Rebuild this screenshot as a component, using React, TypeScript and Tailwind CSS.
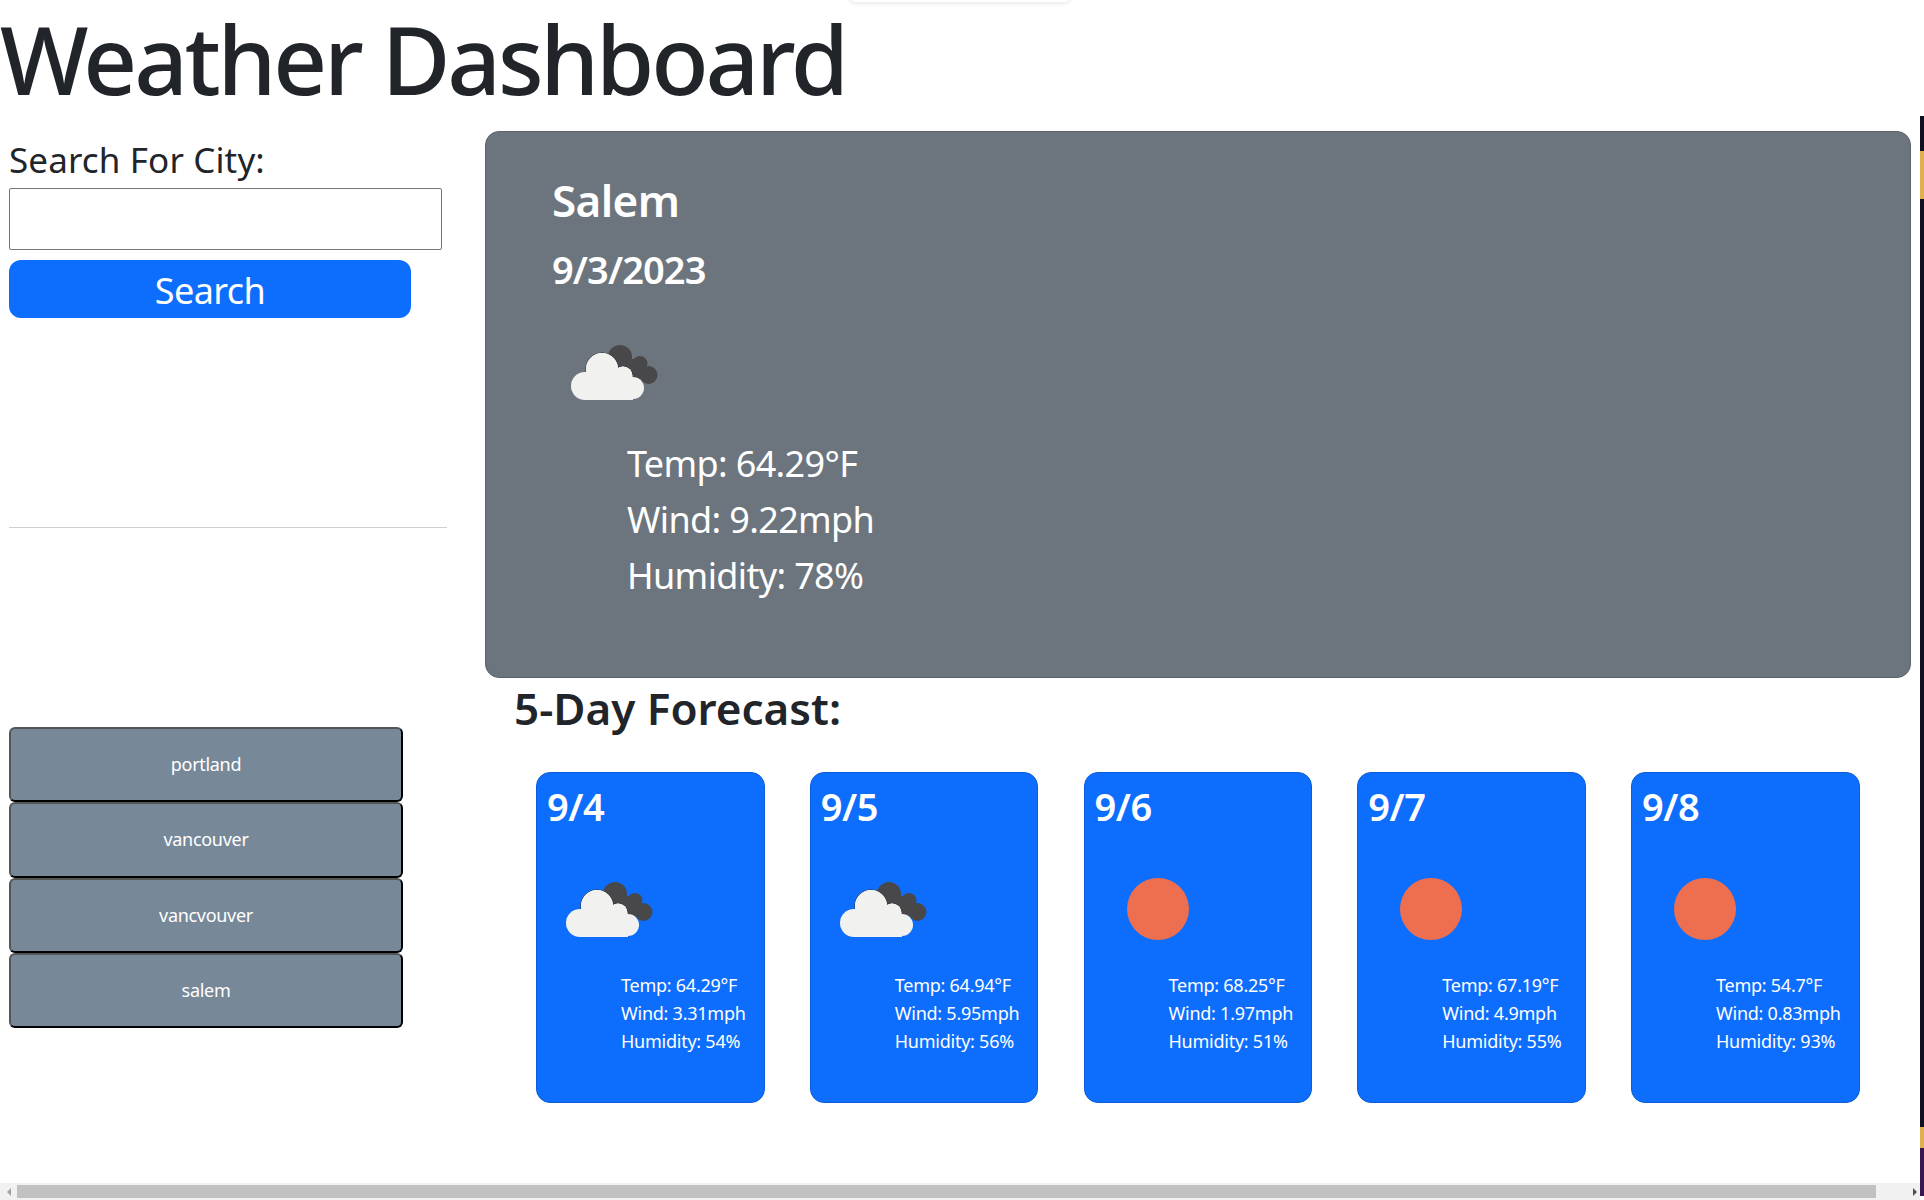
const font = "font-['Noto_Sans','Open_Sans',sans-serif]"

const cities = ["portland", "vancouver", "vancvouver", "salem"]

const forecast = [
  { date: "9/4", icon: "clouds", temp: "64.29", wind: "3.31", humidity: "54" },
  { date: "9/5", icon: "clouds", temp: "64.94", wind: "5.95", humidity: "56" },
  { date: "9/6", icon: "sun", temp: "68.25", wind: "1.97", humidity: "51" },
  { date: "9/7", icon: "sun", temp: "67.19", wind: "4.9", humidity: "55" },
  { date: "9/8", icon: "sun", temp: "54.7", wind: "0.83", humidity: "93" },
]

function CloudIcon() {
  return (
    <svg width="87" height="55" viewBox="0 0 87 55" className="block">
      {/* back cloud */}
      <g fill="#48484a">
        <circle cx="49" cy="12" r="12" />
        <circle cx="69" cy="18.5" r="7.5" />
        <circle cx="77.5" cy="30" r="9" />
        <rect x="45" y="14" width="30" height="20" />
      </g>
      {/* front cloud */}
      <g fill="#f1f1f0" stroke="#3a3a3c" strokeWidth="1.2" paintOrder="stroke">
        <circle cx="31" cy="24" r="16" />
        <circle cx="52" cy="31" r="9.5" />
      </g>
      <g fill="#f1f1f0">
        <circle cx="31" cy="24" r="16" />
        <circle cx="52" cy="31" r="9.5" />
        <circle cx="14" cy="41" r="14" />
        <circle cx="62" cy="43" r="11" />
        <rect x="14" y="32" width="48" height="23" />
      </g>
    </svg>
  )
}

function ForecastCard({ day }: { day: (typeof forecast)[number] }) {
  return (
    <div className="w-[228.5px] h-[331px] shrink-0 bg-[#0d6efd] border border-[#0b5ed7] rounded-[14px] text-white pl-[10px] pt-[10px]">
      <h3 className="text-[38px] leading-[46px] font-semibold tracking-[-0.5px]">{day.date}</h3>
      <div className="h-[82px] mt-[36px] flex items-center">
        {day.icon === "clouds" ? (
          <div className="ml-[19px] mt-[6px]">
            <CloudIcon />
          </div>
        ) : (
          <div className="ml-[32px] mt-[6px] w-[62px] h-[62px] rounded-full bg-[#ed6f4f]" />
        )}
      </div>
      <div className="ml-[74px] mt-[24px] text-[18px] leading-[28px] tracking-[-0.25px] whitespace-nowrap">
        <p>Temp: {day.temp}°F</p>
        <p>Wind: {day.wind}mph</p>
        <p>Humidity: {day.humidity}%</p>
      </div>
    </div>
  )
}

export default function App() {
  return (
    <div className={`${font} relative w-[1924px] h-[1200px] overflow-hidden bg-white flex text-[#212529]`}>
      {/* shadow of the browser popup at the top edge */}
      <div className="absolute left-[850px] top-[-10px] w-[220px] h-[12px] rounded-[6px] shadow-[0_0_6px_rgba(0,0,0,0.15)]" />

      <div className="w-[1920px] h-[1200px] flex flex-col shrink-0">
        <h1 className="text-[94px] leading-[119px] h-[131px] font-medium tracking-[-3.2px] whitespace-nowrap">
          Weather Dashboard
        </h1>

        <div className="flex flex-1">
          {/* sidebar */}
          <div className="w-[485px] shrink-0 pl-[9px]">
            <label className="block text-[35px] leading-[50px] mt-[4px] tracking-[0.13px]">Search For City:</label>
            <input className="block w-[433px] h-[62px] mt-[3px] border border-[#767676] rounded-[2px] bg-white" />
            <button className="block w-[402px] h-[58px] mt-[10px] pt-[3px] rounded-[12px] bg-[#0d6efd] text-white text-[36px] leading-[55px] tracking-[-0.6px]">
              Search
            </button>
            <hr className="w-[438px] mt-[209px] border-t border-[#cfcfcf]" />
            <div className="mt-[199px] flex flex-col">
              {cities.map((city) => (
                <button
                  key={city}
                  className="block w-[394px] h-[75.33px] bg-[#778899] text-white text-[18px] tracking-[-0.3px] rounded-[6px] border-[2px] border-t-[#555555] border-l-[#555555] border-r-black border-b-black"
                >
                  {city}
                </button>
              ))}
            </div>
          </div>

          {/* current weather and forecast */}
          <div className="flex-1 pr-[9px]">
            <div className="h-[547px] bg-[#6c757d] border border-[#5c636a] rounded-[14px] text-white pl-[66px] pt-[38px]">
              <h2 className="text-[44px] leading-[60px] font-semibold tracking-[-0.6px]">Salem</h2>
              <h3 className="text-[38px] leading-[52px] mt-[13px] font-semibold tracking-[-0.9px]">9/3/2023</h3>
              <div className="ml-[19px] mt-[50px]">
                <CloudIcon />
              </div>
              <div className="ml-[75px] mt-[36px] text-[36px] leading-[56px] tracking-[-0.65px]">
                <p>Temp: 64.29°F</p>
                <p>Wind: 9.22mph</p>
                <p>Humidity: 78%</p>
              </div>
            </div>

            <h2 className="text-[44px] leading-[58px] ml-[29px] mt-[1px] font-semibold tracking-[0px]">5-Day Forecast:</h2>

            <div className="flex gap-[45.25px] ml-[51px] mt-[35px]">
              {forecast.map((day) => (
                <ForecastCard key={day.date} day={day} />
              ))}
            </div>
          </div>
        </div>

        {/* horizontal scrollbar */}
        <div className="h-[17px] shrink-0 bg-[#f1f1f1] flex items-center">
          <div className="w-[17px] flex justify-center">
            <div className="w-0 h-0 border-y-[4px] border-y-transparent border-r-[4px] border-r-[#a3a3a3]" />
          </div>
          <div className="w-[1859px] h-[13px] bg-[#c1c1c1]" />
          <div className="flex-1 flex justify-end pr-[3px]">
            <div className="w-0 h-0 border-y-[4px] border-y-transparent border-l-[4px] border-l-[#505050]" />
          </div>
        </div>
      </div>

      {/* sliver of the window behind */}
      <div className="w-[4px] flex flex-col pt-[116px] pb-[4px]">
        <div className="h-[35px] bg-[#0f1020]" />
        <div className="h-[48px] bg-[#e0b050]" />
        <div className="h-[928px] bg-[#0f1020]" />
        <div className="h-[21px] bg-[#e0b050]" />
        <div className="flex-1 bg-[#3a1650]" />
      </div>
    </div>
  )
}
